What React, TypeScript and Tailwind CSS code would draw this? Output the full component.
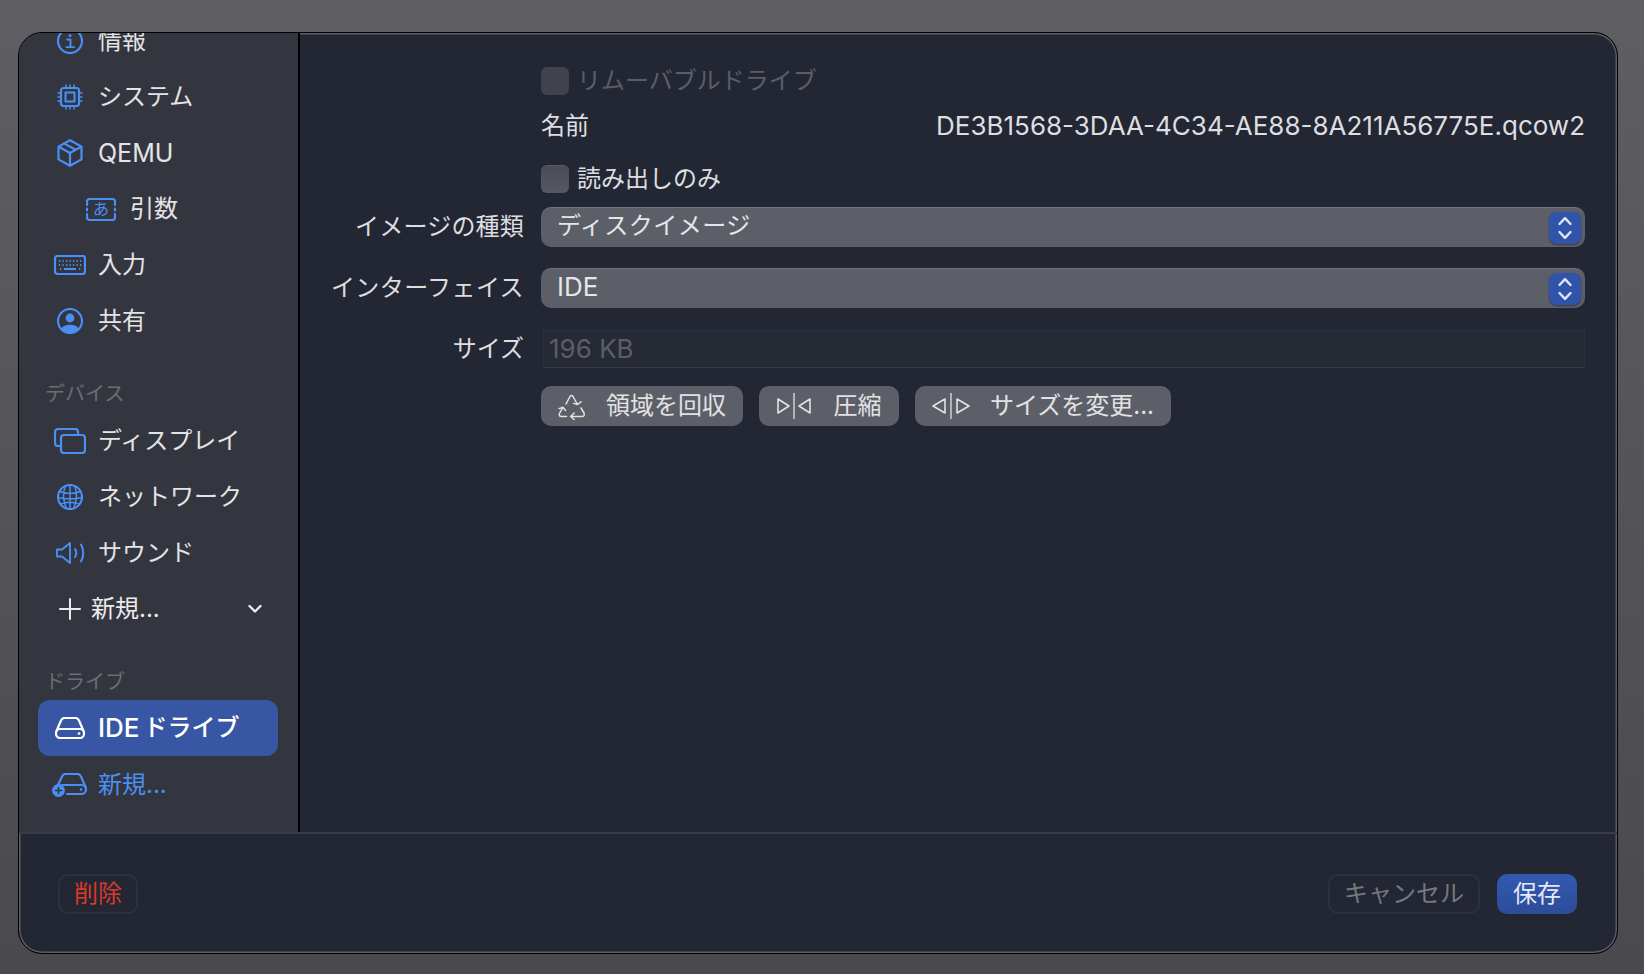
import React from "react";

const FONT = "font-['Inter','Noto_Sans_CJK_JP',sans-serif]";

function Svg({ w, h, children, className = "" }: { w: number; h: number; children: React.ReactNode; className?: string }) {
  return (
    <svg width={w} height={h} viewBox={`0 0 ${w} ${h}`} fill="none" stroke="currentColor" strokeWidth={2.2} strokeLinecap="round" strokeLinejoin="round" className={className}>
      {children}
    </svg>
  );
}

const InfoIcon = () => (
  <Svg w={26} h={26}>
    <circle cx={13} cy={13} r={12} />
    <circle cx={13} cy={7.5} r={1.5} fill="currentColor" stroke="none" />
    <path d="M10 11.5H13.5V19M9.5 19.2H17" strokeWidth={1.8} />
  </Svg>
);
const CpuIcon = () => (
  <Svg w={26} h={26}>
    <rect x={4} y={4} width={18} height={18} rx={2.5} strokeWidth={2.2} />
    <rect x={8.5} y={8.5} width={9} height={9} strokeWidth={2} />
    <path d="M9 1V3M13 1V3M17 1V3M9 23V25M13 23V25M17 23V25M1 9H3M1 13H3M1 17H3M23 9H25M23 13H25M23 17H25" strokeWidth={1.5} />
  </Svg>
);
const BoxIcon = () => (
  <Svg w={26} h={28}>
    <path d="M13 1.2L24.5 7.6V20.4L13 26.8L1.5 20.4V7.6Z" />
    <path d="M1.8 7.8L13 14L24.2 7.8M13 14V26.5M7 4.4L18.6 10.8" />
  </Svg>
);
const ArgsIcon = () => (
  <div className="relative h-[23px] w-[30px]">
    <Svg w={30} h={23}>
      <path d="M1 7V3.5A2.5 2.5 0 0 1 3.5 1H26.5A2.5 2.5 0 0 1 29 3.5V7M1 16V19.5A2.5 2.5 0 0 0 3.5 22H26.5A2.5 2.5 0 0 0 29 19.5V16M1 10.5V12.5M29 10.5V12.5" />
    </Svg>
    <span className="absolute inset-0 flex items-center justify-center text-[16px] leading-none text-[#4a8ff5]">あ</span>
  </div>
);
const KeyboardIcon = () => (
  <Svg w={32} h={20}>
    <rect x={1} y={1} width={30} height={18} rx={2.5} />
    <path d="M5 6H6.2M8.5 6H9.7M12 6H13.2M15.5 6H16.7M19 6H20.2M22.5 6H23.7M26 6H27.2M5 10H6.2M8.5 10H9.7M12 10H13.2M15.5 10H16.7M19 10H20.2M22.5 10H23.7M26 10H27.2M6 14H7.2M10 14H22M25 14H26.2" strokeWidth={2} strokeLinecap="butt" />
  </Svg>
);
const PersonIcon = () => (
  <Svg w={26} h={26}>
    <circle cx={13} cy={13} r={12} />
    <circle cx={13} cy={10} r={4.4} fill="currentColor" stroke="none" />
    <path d="M4 20.5C6.5 17.6 9.5 16.8 13 16.8C16.5 16.8 19.5 17.6 22 20.5C19.8 23.6 16.5 25 13 25C9.5 25 6.2 23.6 4 20.5Z" fill="currentColor" stroke="none" />
  </Svg>
);
const DisplayIcon = () => (
  <Svg w={32} h={26}>
    <path d="M6 18H4A3 3 0 0 1 1 15V4A3 3 0 0 1 4 1H21A3 3 0 0 1 24 4V7" />
    <rect x={7} y={7} width={24} height={18} rx={3} />
  </Svg>
);
const GlobeIcon = () => (
  <Svg w={26} h={26}>
    <circle cx={13} cy={13} r={12} />
    <path d="M13 1V25M8.5 2C5.5 8 6 18 9.5 24.5M17.5 2C20.5 8 20 18 16.5 24.5M2.5 7.5C8 10 18 10 23.5 7.5M1 13.5C8 15 18 15 25 13.5M3.5 20C9 17.5 17 17.5 22.5 20" strokeWidth={1.5} />
  </Svg>
);
const SpeakerIcon = () => (
  <Svg w={29} h={22}>
    <path d="M1 7.5H6L14 1V21L6 14.5H1Z" strokeWidth={1.9} />
    <path d="M19 7C20.4 9.2 20.4 12.8 19 15M25 2.5C28 7.5 28 14.5 25 19.5" strokeWidth={2} />
  </Svg>
);
const DriveIcon = () => (
  <Svg w={30} h={22}>
    <path d="M1.5 14L6 3.5C6.7 2 7.6 1 9.5 1H20.5C22.4 1 23.3 2 24 3.5L28.5 14" />
    <rect x={1} y={12} width={28} height={9} rx={4} />
    <circle cx={24} cy={16.5} r={1.3} fill="currentColor" stroke="none" />
  </Svg>
);
const NewDriveIcon = () => (
  <Svg w={35} h={24}>
    <path d="M6 12L10 3.5C10.7 2 11.6 1 13.5 1H25.5C27.4 1 28.3 2 29 3.5L33.5 14" />
    <path d="M15 21H29.5A4.5 4.5 0 0 0 29.5 12H10" />
    <circle cx={29} cy={16.5} r={1.3} fill="currentColor" stroke="none" />
    <circle cx={6.5} cy={17.5} r={6.4} fill="currentColor" stroke="none" />
    <path d="M6.5 14.5V20.5M3.5 17.5H9.5" stroke="#34363f" strokeWidth={1.6} />
  </Svg>
);
const RecycleIcon = () => (
  <Svg w={27} h={27}>
    <g strokeWidth={1.5}>
      <path d="M8 11L12 3.5Q13.5 1.5 15 3.5L19.5 11.5M23 8.8L19.5 11.5L15.6 10.4" />
      <path d="M23 15L26 20Q27 23.5 24 23.5H13M16.2 20L12.6 23.5L16.2 26.5" />
      <path d="M8.5 23.5H3.5Q0.5 23.5 1.5 20.5L4.7 14.5M1 15.6L4.9 14.2L7.6 17.5" />
    </g>
  </Svg>
);
const CompressIcon = () => (
  <Svg w={34} h={26}>
    <path d="M17 0.5V25.5" strokeWidth={1.3} />
    <path d="M1 6V20L12 13Z M33 6V20L22 13Z" strokeWidth={1.6} />
  </Svg>
);
const ExpandIcon = () => (
  <Svg w={38} h={26}>
    <path d="M19 0.5V25.5" strokeWidth={1.3} />
    <path d="M13 6V20L1 13Z M25 6V20L37 13Z" strokeWidth={1.6} />
  </Svg>
);

function Row({ icon, label, sub = false, latin = false }: { icon: React.ReactNode; label: string; sub?: boolean; latin?: boolean }) {
  return (
    <div className={`flex h-14 items-center text-[#e4e4e6] ${sub ? "pl-[67px]" : "pl-[35px]"}`}>
      <div className={`flex h-8 shrink-0 items-center justify-center text-[#4a8ff5] ${sub ? "w-[30px]" : "w-8"}`}>{icon}</div>
      <span className={`${sub ? "ml-[14px]" : "ml-[12px]"} ${latin ? "text-[25px]" : ""}`}>{label}</span>
    </div>
  );
}

function Select({ value, latin = false }: { value: string; latin?: boolean }) {
  return (
    <div className="flex h-10 items-center justify-between rounded-[10px] border-t border-[#72747c] bg-[#5d5f68] pl-4 pr-1 text-[#e6e6e8]">
      <span className={latin ? "-mt-[3px] text-[26px]" : "-mt-[3px] tracking-[0.5px]"}>{value}</span>
      <div className="flex h-8 w-8 items-center justify-center rounded-lg bg-[#3154ab] text-[#dfe5f6] shadow-[0_1px_2px_rgba(0,0,0,0.4)]">
        <svg width="16" height="26" viewBox="0 0 16 26" fill="none" stroke="currentColor" strokeWidth="2.4" strokeLinecap="round" strokeLinejoin="round">
          <path d="M2.5 9L8 3.2L13.5 9M2.5 17L8 22.8L13.5 17" />
        </svg>
      </div>
    </div>
  );
}

function Btn({ icon, label, gap, w }: { icon: React.ReactNode; label: string; gap: string; w: string }) {
  return (
    <div className={`flex h-10 items-center justify-center rounded-[10px] bg-[#5d5f68] text-[#e2e2e4] ${w} ${gap}`}>
      {icon}
      <span className="-mt-px">{label}</span>
    </div>
  );
}

export default function App() {
  return (
    <div className={`h-[974px] w-[1644px] overflow-hidden bg-gradient-to-b from-[#5f5e63] to-[#4a494d] pl-[18px] pt-[32px] text-[24px] leading-8 ${FONT}`}>
      <div className="flex h-[922px] w-[1600px] flex-col overflow-hidden rounded-[24px] border border-black bg-[#232733] shadow-[inset_0_0_0_1.5px_#5c5e66]">
        <div className="flex h-[799px] shrink-0">
          <aside className="flex w-[281px] shrink-0 flex-col overflow-hidden border-r-2 border-black bg-[#34363f]">
            <div className="-mt-[20px]">
              <Row icon={<InfoIcon />} label="情報" />
              <Row icon={<CpuIcon />} label="システム" />
              <Row icon={<BoxIcon />} label="QEMU" latin />
              <Row icon={<ArgsIcon />} label="引数" sub />
              <Row icon={<KeyboardIcon />} label="入力" />
              <Row icon={<PersonIcon />} label="共有" />
              <div className="mt-[29px] pl-[26px] text-[20px] leading-8 text-[#6b6d74]">デバイス</div>
              <div className="mt-[3px]" />
              <Row icon={<DisplayIcon />} label="ディスプレイ" />
              <Row icon={<GlobeIcon />} label="ネットワーク" />
              <Row icon={<SpeakerIcon />} label="サウンド" />
              <div className="flex h-14 items-center justify-between pl-[40px] pr-[36px] text-[#ececee]">
                <div className="flex items-center gap-[10px]">
                  <svg width="22" height="22" viewBox="0 0 22 22" stroke="currentColor" strokeWidth="2" strokeLinecap="round"><path d="M11 1V21M1 11H21" /></svg>
                  <span>新規...</span>
                </div>
                <svg width="14" height="10" viewBox="0 0 14 10" fill="none" stroke="currentColor" strokeWidth="2.4" strokeLinecap="round" strokeLinejoin="round"><path d="M1.5 2L7 7.5L12.5 2" /></svg>
              </div>
              <div className="mt-[29px] pl-[26px] text-[20px] leading-8 text-[#6b6d74]">ドライブ</div>
              <div className="ml-[19px] mr-[20px] mt-[2px] flex h-14 items-center rounded-xl bg-[#3757a5] pl-[16px] font-medium text-white">
                <div className="flex h-8 w-8 items-center justify-center"><DriveIcon /></div>
                <span className="ml-[12px] text-[26px]">IDE</span>
                <span className="ml-[4px]">ドライブ</span>
              </div>
              <div className="mt-px flex h-14 items-center pl-[33px] text-[#4a8ff5]">
                <div className="flex h-8 w-[35px] items-center justify-center"><NewDriveIcon /></div>
                <span className="ml-[11px]">新規...</span>
              </div>
            </div>
          </aside>
          <main className="flex-1 pr-[32px] pt-[34px]">
            <div className="grid grid-cols-[224px_1fr] gap-x-[17px]">
              <div />
              <div className="flex h-7 items-center gap-2 text-[#5c5e66]">
                <div className="h-7 w-7 rounded-md bg-[#41434c]" />
                <span>リムーバブルドライブ</span>
              </div>
              <div />
              <div className="mt-[15px] flex h-8 items-center justify-between text-[#dedee0]">
                <span>名前</span>
                <span className="text-[26px]">DE3B1568-3DAA-4C34-AE88-8A211A56775E.qcow2</span>
              </div>
              <div />
              <div className="mt-[23px] flex h-7 items-center gap-2 text-[#dedee0]">
                <div className="h-7 w-7 rounded-md border-t border-[#5b5d66] bg-gradient-to-b from-[#4b4d56] to-[#575962]" />
                <span>読み出しのみ</span>
              </div>
              <div className="mt-[14px] flex h-10 items-center justify-end tracking-[0.2px] text-[#dedee0]">イメージの種類</div>
              <div className="mt-[14px]"><Select value="ディスクイメージ" /></div>
              <div className="mt-[21px] flex h-10 items-center justify-end tracking-[0.4px] text-[#dedee0]">インターフェイス</div>
              <div className="mt-[21px]"><Select value="IDE" latin /></div>
              <div className="mt-[22px] flex h-[38px] items-center justify-end text-[#dedee0]">サイズ</div>
              <div className="ml-[2px] mt-[22px] flex h-[38px] items-center border border-[#2c303b] border-b-[#3a3d47] bg-[#262a35] pl-[5px] text-[26px] text-[#5c5e66]">196 KB</div>
              <div />
              <div className="mt-[18px] flex gap-4">
                <Btn icon={<RecycleIcon />} label="領域を回収" gap="gap-[21px]" w="w-[202px]" />
                <Btn icon={<CompressIcon />} label="圧縮" gap="gap-[23px]" w="w-[140px]" />
                <Btn icon={<ExpandIcon />} label="サイズを変更..." gap="gap-[20px]" w="w-[256px]" />
              </div>
            </div>
          </main>
        </div>
        <footer className="flex flex-1 items-start justify-between border-t-2 border-[#3a3c45] pl-[39px] pr-[40px] pt-[40px]">
          <div className="flex h-10 w-20 items-center justify-center rounded-[10px] border-2 border-[#2e313c] text-[#d9382b]">削除</div>
          <div className="flex gap-[17px]">
            <div className="flex h-10 w-[152px] items-center justify-center rounded-[10px] border-2 border-[#2e313c] text-[#77797e]">キャンセル</div>
            <div className="flex h-10 w-20 items-center justify-center rounded-[10px] bg-gradient-to-b from-[#3359b0] to-[#2d4c9a] text-[#e4e9f6]">保存</div>
          </div>
        </footer>
      </div>
    </div>
  );
}
